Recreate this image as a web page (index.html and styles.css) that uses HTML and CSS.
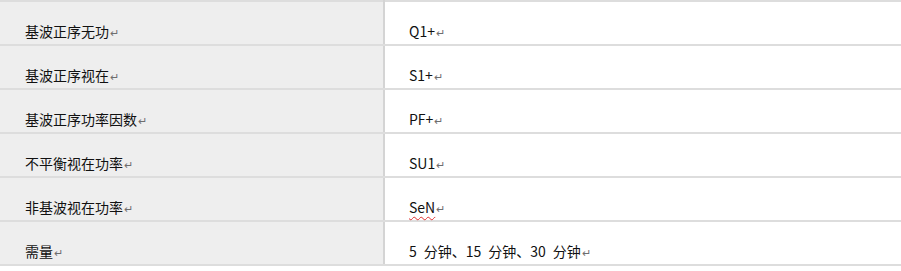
FILE: index.html
```html
<!DOCTYPE html>
<html lang="zh">
<head>
<meta charset="utf-8">
<link rel="stylesheet" href="styles.css">
</head>
<body>
<table class="params">
  <tr><td class="name">基波正序无功<span class="pm">↵</span></td><td class="val">Q1+<span class="pm">↵</span></td></tr>
  <tr><td class="name">基波正序视在<span class="pm">↵</span></td><td class="val">S1+<span class="pm">↵</span></td></tr>
  <tr><td class="name">基波正序功率因数<span class="pm">↵</span></td><td class="val">PF+<span class="pm">↵</span></td></tr>
  <tr><td class="name">不平衡视在功率<span class="pm">↵</span></td><td class="val">SU1<span class="pm">↵</span></td></tr>
  <tr><td class="name">非基波视在功率<span class="pm">↵</span></td><td class="val"><span class="spell">SeN</span><span class="pm">↵</span></td></tr>
  <tr><td class="name">需量<span class="pm">↵</span></td><td class="val">5&ensp;分钟、15&ensp;分钟、30&ensp;分钟<span class="pm">↵</span></td></tr>
</table>
</body>
</html>
```
FILE: styles.css
```css
html, body {
  margin: 0;
  padding: 0;
  background: #ffffff;
}
.params {
  width: 901px;
  border-collapse: collapse;
  table-layout: fixed;
  font-family: "Noto Sans CJK SC", "Liberation Sans", sans-serif;
  font-size: 14px;
  color: #111111;
}
.params tr {
  height: 44px;
}
.params td {
  border-top: 2px solid #dddddd;
  border-bottom: 2px solid #dddddd;
  vertical-align: bottom;
  padding: 0 0 2px 0;
  line-height: 20px;
}
.name {
  width: 358px;
  background: #eeeeee;
  padding-left: 25px !important;
  border-right: 2px solid #d4d4d4;
}
.val {
  padding-left: 24px !important;
}
.pm {
  color: #6e6e6e;
  font-size: 11px;
  margin-left: 1px;
}
.spell {
  text-decoration: underline wavy #e03030;
  text-underline-offset: 3px;
  text-decoration-thickness: 1px;
}
```
